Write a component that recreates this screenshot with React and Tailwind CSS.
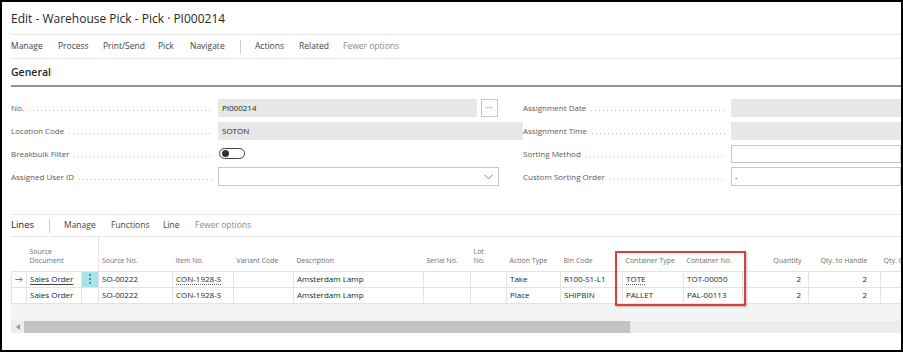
import React from "react";

const font = "font-['Open_Sans','Noto_Sans',sans-serif]";

// ─── small pieces ────────────────────────────────────────────────────────────
function Leader() {
  return (
    <span className="flex-1 ml-[5px] mr-[6px] h-px translate-y-[3px] bg-[linear-gradient(to_right,#bdbdbd_1px,transparent_1px)] bg-[length:4px_1px] bg-repeat-x" />
  );
}

function Field({ label, width, children }) {
  return (
    <div className="flex items-center h-[23px]">
      <div className={`${width} shrink-0 flex items-center text-[8px] text-[#5a5a5a]`}>
        <span className="whitespace-nowrap">{label}</span>
        <Leader />
      </div>
      {children}
    </div>
  );
}

function Toggle() {
  return (
    <div className="ml-[1px] w-[26px] h-[11px] rounded-full border border-[#444] flex items-center pl-[2px]">
      <div className="w-[7px] h-[7px] rounded-full bg-[#333]" />
    </div>
  );
}

const cols = [15, 55, 17, 74, 61, 60, 130, 47, 36, 54, 62, 61, 59, 66, 72, 80];

const rows = [
  {
    current: true,
    src: "Sales Order",
    no: "SO-00222",
    item: "CON-1928-S",
    desc: "Amsterdam Lamp",
    action: "Take",
    bin: "R100-S1-L1",
    ctype: "TOTE",
    cno: "TOT-00050",
    qty: "2",
    handle: "2",
  },
  {
    current: false,
    src: "Sales Order",
    no: "SO-00222",
    item: "CON-1928-S",
    desc: "Amsterdam Lamp",
    action: "Place",
    bin: "SHIPBIN",
    ctype: "PALLET",
    cno: "PAL-00113",
    qty: "2",
    handle: "2",
  },
];

// ─── Main page ───────────────────────────────────────────────────────────────
export default function App() {
  const td = "border-r border-[#e3e3e3] px-[3px] whitespace-nowrap overflow-hidden";
  const th = "align-bottom text-left font-normal text-[7px] leading-[9px] text-[#6e6e6e] px-[3px] pb-[6px] whitespace-nowrap";

  return (
    <div className={`w-[903px] h-[352px] border-2 border-black bg-white overflow-hidden text-[#262626] ${font}`}>
      <div className="pl-[9px] relative h-full">
        {/* Title */}
        <div className="h-[33px] flex items-center pt-[1px] text-[12px] text-[#262626] border-b border-[#e6e6e6]">
          Edit - Warehouse Pick - Pick · PI000214
        </div>

        {/* Action bar */}
        <div className="h-[24px] flex items-center text-[8.5px] text-[#444] border-b border-[#e6e6e6] whitespace-nowrap">
          <span className="w-[47px] shrink-0">Manage</span>
          <span className="w-[45px] shrink-0">Process</span>
          <span className="w-[55px] shrink-0">Print/Send</span>
          <span className="w-[32px] shrink-0">Pick</span>
          <span className="w-[50px] shrink-0">Navigate</span>
          <span className="h-[14px] w-px bg-[#cfcfcf] mr-[14px] shrink-0" />
          <span className="w-[44px] shrink-0">Actions</span>
          <span className="w-[44px] shrink-0">Related</span>
          <span className="text-[#8a8a8a]">Fewer options</span>
        </div>

        {/* General */}
        <div className="h-[28px] flex items-end pb-[4px] text-[10.5px] font-semibold text-[#262626] border-b-2 border-[#8e95a3]">
          General
        </div>

        <div className="grid grid-cols-[512px_1fr] pt-[9px]">
          <div>
            <Field label="No." width="w-[207px]">
              <div className="w-[259px] h-[18px] bg-[#e7e7e7] flex items-center pl-[4px] text-[8px]">PI000214</div>
              <div className="ml-[4px] w-[17px] h-[18px] border border-[#c6c6c6] flex items-center justify-center text-[8px] text-[#555] leading-none pb-[2px]">
                ···
              </div>
            </Field>
            <Field label="Location Code" width="w-[207px]">
              <div className="w-[309px] h-[18px] bg-[#e7e7e7] flex items-center pl-[4px] text-[8px]">SOTON</div>
            </Field>
            <Field label="Breakbulk Filter" width="w-[207px]">
              <Toggle />
            </Field>
            <Field label="Assigned User ID" width="w-[207px]">
              <div className="w-[281px] h-[19px] border border-[#c6c6c6] flex items-center justify-end pr-[5px]">
                <svg width="9" height="6" viewBox="0 0 9 6" fill="none">
                  <path d="M0.5 0.8 L4.5 4.8 L8.5 0.8" stroke="#777" strokeWidth="0.9" />
                </svg>
              </div>
            </Field>
          </div>
          <div>
            <Field label="Assignment Date" width="w-[208px]">
              <div className="flex-1 h-[18px] bg-[#e7e7e7]" />
            </Field>
            <Field label="Assignment Time" width="w-[208px]">
              <div className="flex-1 h-[18px] bg-[#e7e7e7]" />
            </Field>
            <Field label="Sorting Method" width="w-[208px]">
              <div className="flex-1 h-[18px] border border-[#c6c6c6]" />
            </Field>
            <Field label="Custom Sorting Order" width="w-[208px]">
              <div className="flex-1 h-[19px] border border-[#c6c6c6] flex items-center pl-[3px] text-[8px]">-</div>
            </Field>
          </div>
        </div>

        {/* Lines */}
        <div className="mt-[26px] border-t border-[#e6e6e6] h-[23px] flex items-center text-[8.5px] text-[#444] border-b whitespace-nowrap">
          <span className="text-[9.5px] text-[#262626] w-[38px] shrink-0">Lines</span>
          <span className="h-[14px] w-px bg-[#cfcfcf] mr-[14px] shrink-0" />
          <span className="w-[47px] shrink-0">Manage</span>
          <span className="w-[52px] shrink-0">Functions</span>
          <span className="w-[32px] shrink-0">Line</span>
          <span className="text-[#8a8a8a]">Fewer options</span>
        </div>

        <div className="overflow-hidden">
          <table className="table-fixed border-collapse w-[949px] text-[8px]">
            <colgroup>
              {cols.map((w, i) => (
                <col key={i} style={{ width: w }} />
              ))}
            </colgroup>
            <thead>
              <tr className="h-[34px]">
                <th className={th}></th>
                <th className={th}>
                  Source
                  <br />
                  Document
                </th>
                <th className={`${th} border-r border-[#e3e3e3]`}></th>
                <th className={th}>Source No.</th>
                <th className={th}>Item No.</th>
                <th className={th}>Variant Code</th>
                <th className={th}>Description</th>
                <th className={th}>Serial No.</th>
                <th className={th}>
                  Lot
                  <br />
                  No.
                </th>
                <th className={th}>Action Type</th>
                <th className={th}>Bin Code</th>
                <th className={th}>Container Type</th>
                <th className={th}>Container No.</th>
                <th className={`${th} text-right pr-[7px]`}>Quantity</th>
                <th className={`${th} text-right pr-[13px]`}>Qty. to Handle</th>
                <th className={th}>Qty. Outstanding</th>
              </tr>
            </thead>
            <tbody>
              {rows.map((r, i) => (
                <tr key={i} className="h-[16px] border-t border-b border-[#e3e3e3]">
                  <td className={`${td} border-l p-0`}>
                    {r.current && (
                      <div className="flex justify-center">
                        <svg width="10" height="7" viewBox="0 0 10 7" fill="none">
                          <path d="M0.5 3.5 H9 M6 0.8 L9 3.5 L6 6.2" stroke="#444" strokeWidth="0.9" />
                        </svg>
                      </div>
                    )}
                  </td>
                  <td className={td}>
                    <span className={r.current ? "underline underline-offset-2 decoration-[#444]" : ""}>{r.src}</span>
                  </td>
                  <td className={`${td} p-0 ${r.current ? "bg-[#a9e3ea]" : ""}`}>
                    {r.current && (
                      <div className="flex flex-col items-center gap-[2px]">
                        <span className="w-[2px] h-[2px] rounded-full bg-[#1a7f8c]" />
                        <span className="w-[2px] h-[2px] rounded-full bg-[#1a7f8c]" />
                        <span className="w-[2px] h-[2px] rounded-full bg-[#1a7f8c]" />
                      </div>
                    )}
                  </td>
                  <td className={td}>{r.no}</td>
                  <td className={td}>
                    <span className={r.current ? "underline decoration-dotted underline-offset-2 decoration-[#666]" : ""}>{r.item}</span>
                  </td>
                  <td className={td}></td>
                  <td className={td}>{r.desc}</td>
                  <td className={td}></td>
                  <td className={td}></td>
                  <td className={td}>{r.action}</td>
                  <td className={td}>{r.bin}</td>
                  <td className={td}>
                    <span className={r.current ? "underline decoration-dotted underline-offset-2 decoration-[#666]" : ""}>{r.ctype}</span>
                  </td>
                  <td className={td}>{r.cno}</td>
                  <td className={`${td} text-right pr-[7px]`}>{r.qty}</td>
                  <td className={`${td} text-right pr-[13px]`}>{r.handle}</td>
                  <td className={td}></td>
                </tr>
              ))}
            </tbody>
          </table>
          <div className="h-[17px] bg-[#f4f4f4]" />
          <div className="h-[12px] bg-[#ececec] flex items-center">
            <span className="w-[13px] flex justify-center">
              <svg width="4" height="6" viewBox="0 0 4 6">
                <path d="M4 0 L0 3 L4 6 Z" fill="#9a9a9a" />
              </svg>
            </span>
            <div className="w-[606px] h-[12px] bg-[#c3c3c3]" />
          </div>
        </div>

        {/* highlight box */}
        <div className="absolute left-[613px] top-[249px] w-[131px] h-[55px] border-2 border-[#e03c3c] shadow-[1px_1px_2px_rgba(0,0,0,0.25)] pointer-events-none" />
      </div>
    </div>
  );
}
